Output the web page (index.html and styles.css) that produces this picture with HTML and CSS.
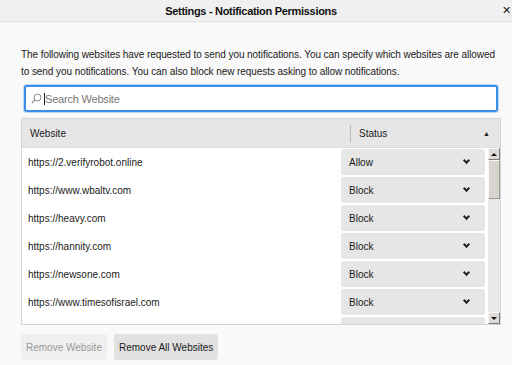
FILE: index.html
```html
<!DOCTYPE html>
<html lang="en">
<head>
    <meta charset="UTF-8">
    <meta name="viewport" content="width=device-width, initial-scale=1.0">
    <title>Settings - Notification Permissions</title>
    <link rel="stylesheet" href="styles.css">
</head>
<body>

<div class="titlebar">
    <span></span>
    <span class="title">Settings - Notification Permissions</span>
    <span class="close">&#x2715;</span>
</div>

<div class="content">
    <p class="intro">The following websites have requested to send you notifications. You can specify which websites are allowed to send you notifications. You can also block new requests asking to allow notifications.</p>

    <div class="search">
        <svg class="search-icon" width="11" height="11" viewBox="0 0 11 11">
            <circle cx="6.5" cy="4.5" r="3.5" fill="none" stroke="#888" stroke-width="1"/>
            <line x1="4" y1="7" x2="0.8" y2="10.2" stroke="#888" stroke-width="1.2"/>
        </svg>
        <span class="caret"></span>
        <span class="placeholder">Search Website</span>
    </div>

    <div class="sites">
        <div class="sites-head">
            <div class="col-site">Website</div>
            <div class="col-status">
                <span>Status</span>
                <span class="sort">&#x25B2;</span>
            </div>
        </div>
        <div class="sites-body">
            <div class="rows">
                <div class="row"><span>https://2.verifyrobot.online</span><div class="status">Allow<span class="chev"></span></div></div>
                <div class="row"><span>https://www.wbaltv.com</span><div class="status">Block<span class="chev"></span></div></div>
                <div class="row"><span>https://heavy.com</span><div class="status">Block<span class="chev"></span></div></div>
                <div class="row"><span>https://hannity.com</span><div class="status">Block<span class="chev"></span></div></div>
                <div class="row"><span>https://newsone.com</span><div class="status">Block<span class="chev"></span></div></div>
                <div class="row"><span>https://www.timesofisrael.com</span><div class="status">Block<span class="chev"></span></div></div>
                <div class="row"><span></span><div class="status"></div></div>
            </div>
            <div class="scrollbar">
                <div class="sb-btn"><span class="sb-up"></span></div>
                <div class="sb-thumb"></div>
                <div class="sb-track"></div>
                <div class="sb-btn"><span class="sb-down"></span></div>
            </div>
        </div>
    </div>

    <div class="actions">
        <button class="btn" disabled>Remove Website</button>
        <button class="btn">Remove All Websites</button>
    </div>
</div>

</body>
</html>
```

FILE: styles.css
```css
body {
    margin: 0;
    font-family: "Liberation Sans", Arial, sans-serif;
    font-size: 10px;
    color: #1a1a1a;
    background-color: #f9f9f9;
    overflow: hidden;
}
.titlebar {
    height: 21px;
    display: grid;
    grid-template-columns: 1fr auto 1fr;
    align-items: center;
    background-color: #f0f0f0;
    border-bottom: 1px solid #e0e0e0;
}
.title {
    margin-right: 10px;
    font-weight: bold;
    font-size: 11px;
    letter-spacing: -0.3px;
    color: #111;
}
.close {
    justify-self: end;
    margin-right: 1px;
    font-size: 11px;
    color: #222;
}
.content {
    padding: 24px 11px 0 21px;
}
.intro {
    margin: 0;
    line-height: 17px;
    letter-spacing: -0.07px;
}
.search {
    margin: 5px 3px 0 3px;
    height: 23px;
    display: flex;
    align-items: center;
    background: #fff;
    border: 2px solid #3d8ee8;
    border-radius: 3px;
    box-shadow: 0 0 0 1px #b8d6f8;
}
.search-icon {
    margin-left: 5px;
}
.caret {
    width: 1px;
    height: 12px;
    background: #222;
    margin-left: 2px;
}
.placeholder {
    color: #777;
    font-size: 11px;
    letter-spacing: -0.2px;
}
.sites {
    margin-top: 6px;
    border: 1px solid #d4d4d4;
    background: #fff;
}
.sites-head {
    height: 28px;
    display: flex;
    align-items: center;
    background: #e6e6e6;
    border-bottom: 1px solid #dcdcdc;
}
.col-site {
    flex: 1;
    padding-left: 8px;
}
.col-status {
    width: 150px;
    height: 17px;
    box-sizing: border-box;
    display: flex;
    align-items: center;
    justify-content: space-between;
    padding: 0 10px 0 8px;
    border-left: 1px solid #b8b8b8;
}
.sort {
    font-size: 7px;
}
.sites-body {
    height: 176px;
    display: flex;
    overflow: hidden;
}
.rows {
    flex: 1;
}
.row {
    height: 28px;
    display: flex;
    align-items: center;
    justify-content: space-between;
    padding-left: 6px;
}
.status {
    width: 128px;
    height: 26px;
    margin-right: 3px;
    display: flex;
    align-items: center;
    justify-content: space-between;
    padding: 0 8px;
    background: #e6e6e6;
    border-radius: 3px;
}
.chev {
    width: 3px;
    height: 3px;
    border-right: 2px solid #222;
    border-bottom: 2px solid #222;
    transform: rotate(45deg);
    margin: 0 8px 3px 0;
}
.scrollbar {
    width: 12px;
    display: flex;
    flex-direction: column;
    background: #e8e8e6;
}
.sb-btn {
    height: 12px;
    display: flex;
    align-items: center;
    justify-content: center;
    background: #dedbd6;
    border: 1px solid #f8f8f8;
    border-right-color: #7a7a7a;
    border-bottom-color: #7a7a7a;
    box-sizing: border-box;
}
.sb-up,
.sb-down {
    width: 0;
    height: 0;
    border-left: 3px solid transparent;
    border-right: 3px solid transparent;
}
.sb-up {
    border-bottom: 3px solid #111;
}
.sb-down {
    border-top: 3px solid #111;
}
.sb-thumb {
    height: 39px;
    background: #d8d5cf;
    border: 1px solid #f8f8f8;
    border-right-color: #9a9a9a;
    border-bottom-color: #9a9a9a;
    box-sizing: border-box;
}
.sb-track {
    flex: 1;
}
.actions {
    margin-top: 9px;
    display: flex;
    gap: 7px;
}
.btn {
    height: 26px;
    padding: 0 5px;
    font-family: inherit;
    font-size: 10px;
    color: #1a1a1a;
    background: #e1e1e1;
    border: none;
    border-radius: 3px;
}
.btn:disabled {
    color: #999;
    background: #efefef;
}
```
